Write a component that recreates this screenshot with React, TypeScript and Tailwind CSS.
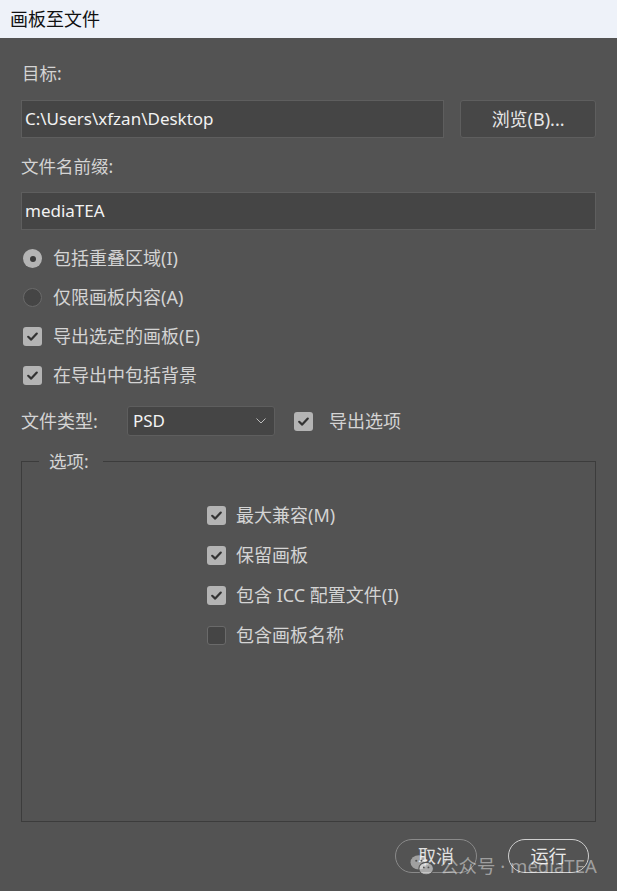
import React from "react";

const FONT = { fontFamily: '"Noto Sans", "Noto Sans CJK SC", sans-serif' };

function Check({ on }: { on: boolean }) {
  return on ? (
    <span className="w-[19px] h-[19px] rounded-[3px] bg-[#b4b4b4] flex items-center justify-center shrink-0">
      <svg width="13" height="13" viewBox="0 0 13 13">
        <path d="M2.2 6.8 L5.2 9.6 L10.8 3.6" fill="none" stroke="#333" strokeWidth="2.2" strokeLinecap="round" strokeLinejoin="round" />
      </svg>
    </span>
  ) : (
    <span className="w-[19px] h-[19px] rounded-[3px] bg-[#454545] border border-[#6a6a6a] shrink-0" />
  );
}

function Radio({ on }: { on: boolean }) {
  return on ? (
    <span className="w-[19px] h-[19px] rounded-full bg-[#b4b4b4] flex items-center justify-center shrink-0">
      <span className="w-[6px] h-[6px] rounded-full bg-[#3a3a3a]" />
    </span>
  ) : (
    <span className="w-[19px] h-[19px] rounded-full bg-[#454545] border border-[#6a6a6a] shrink-0" />
  );
}

export default function App() {
  return (
    <div className="w-[617px] h-[891px] bg-[#535353] relative overflow-hidden text-[18px] text-[#d4d4d4]" style={FONT}>
      <div className="h-[38px] bg-[#eef2f9] flex items-center pl-[10px] text-[18px] text-[#111]">画板至文件</div>

      <div className="px-[21px]">
        <div className="h-[24px] mt-[23px] flex items-center pl-[1px] text-[17.5px]">目标:</div>
        <div className="mt-[15px] flex gap-[16px]">
          <div className="w-[424px] h-[38px] bg-[#454545] border border-[#5e5e5e] flex items-center pl-[3px] text-[17px] text-[#f2f2f2]">
            C:\Users\xfzan\Desktop
          </div>
          <div className="w-[136px] h-[38px] bg-[#474747] border border-[#5e5e5e] rounded-[3px] flex items-center justify-center text-[#e6e6e6]">
            浏览(B)...
          </div>
        </div>

        <div className="h-[24px] mt-[16px] flex items-center text-[17.5px]">文件名前缀:</div>
        <div className="mt-[14px] h-[38px] bg-[#454545] border border-[#5e5e5e] flex items-center pl-[3px] text-[17px] text-[#f2f2f2]">
          mediaTEA
        </div>

        <div className="mt-[9px] flex flex-col">
          <div className="h-[39px] flex items-center gap-[11px] pl-[2px]"><Radio on /> 包括重叠区域(I)</div>
          <div className="h-[39px] flex items-center gap-[11px] pl-[2px]"><Radio on={false} /> 仅限画板内容(A)</div>
          <div className="h-[39px] flex items-center gap-[11px] pl-[2px]"><Check on /> 导出选定的画板(E)</div>
          <div className="h-[39px] flex items-center gap-[11px] pl-[2px]"><Check on /> 在导出中包括背景</div>
        </div>

        <div className="mt-[11px] h-[30px] flex items-center">
          <span className="w-[106px]">文件类型:</span>
          <div className="w-[148px] h-[30px] bg-[#454545] border border-[#5e5e5e] rounded-[3px] flex items-center justify-between pl-[5px] pr-[8px] text-[17px] text-[#f4f4f4]">
            <span>PSD</span>
            <svg width="10" height="6" viewBox="0 0 10 6"><path d="M0.5 0.5 L5 5 L9.5 0.5" fill="none" stroke="#bdbdbd" strokeWidth="1" /></svg>
          </div>
          <span className="ml-[19px]"><Check on /></span>
          <span className="ml-[16px]">导出选项</span>
        </div>

        <fieldset className="mt-[13px] h-[373px] border border-[#3c3c3c] p-0 m-0">
          <legend className="ml-[17px] pl-[10px] pr-[14px] h-[24px] leading-[24px] text-[17.5px]">选项:</legend>
          <div className="pl-[185px] pt-[22px] flex flex-col">
            <div className="h-[40px] flex items-center gap-[10px]"><Check on /> 最大兼容(M)</div>
            <div className="h-[40px] flex items-center gap-[10px]"><Check on /> 保留画板</div>
            <div className="h-[40px] flex items-center gap-[10px]"><Check on /> 包含 ICC 配置文件(I)</div>
            <div className="h-[40px] flex items-center gap-[10px]"><Check on={false} /> 包含画板名称</div>
          </div>
        </fieldset>

        <div className="mt-[17px] flex justify-end gap-[31px] pr-[7px]">
          <div className="w-[82px] h-[34px] rounded-full border border-[#8a8a8a] flex items-center justify-center text-[#e0e0e0]">取消</div>
          <div className="w-[81px] h-[34px] rounded-full border-[1.5px] border-[#cfcfcf] flex items-center justify-center text-[#e8e8e8]">运行</div>
        </div>
      </div>

      <div className="absolute left-[410px] top-[852px] flex items-center text-[18.5px] text-white/45">
        <svg width="25" height="23" viewBox="0 0 24 22" className="mr-[5px]">
          <ellipse cx="8.5" cy="8" rx="8" ry="6.8" fill="rgba(255,255,255,0.45)" />
          <ellipse cx="15.5" cy="14" rx="7" ry="6" fill="rgba(255,255,255,0.5)" stroke="#535353" strokeWidth="1" />
          <circle cx="6" cy="6.5" r="1" fill="#535353" />
          <circle cx="11" cy="6.5" r="1" fill="#535353" />
          <circle cx="13.3" cy="12.8" r="0.9" fill="#535353" />
          <circle cx="17.7" cy="12.8" r="0.9" fill="#535353" />
        </svg>
        <span>公众号 · mediaTEA</span>
      </div>
    </div>
  );
}
